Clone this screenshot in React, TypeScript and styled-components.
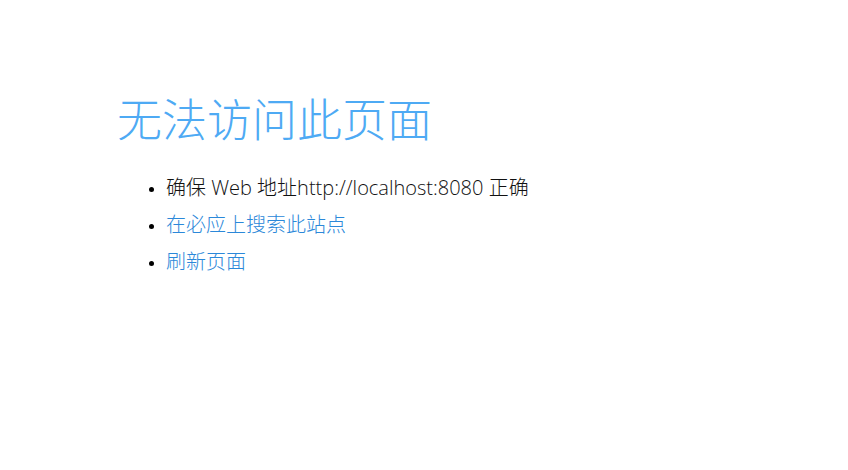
import React from 'react';
import styled, { createGlobalStyle } from 'styled-components';

const GlobalStyle = createGlobalStyle`
  html, body {
    margin: 0;
    padding: 0;
    background: #ffffff;
  }
  body {
    font-family: 'Segoe UI', 'Open Sans', 'Noto Sans CJK SC', sans-serif;
  }
`;

const Page = styled.main`
  padding: 86px 0 0 117px;
`;

const Title = styled.h1`
  margin: 0 0 19px;
  font-family: 'Noto Sans CJK SC', sans-serif;
  font-size: 45px;
  font-weight: 300;
  line-height: 64px;
  color: #4eaaf4;
`;

const Tips = styled.ul`
  margin: 0;
  padding: 0 0 0 49px;
  list-style: disc;
`;

const Tip = styled.li<{ link?: boolean }>`
  font-family: 'Open Sans', 'Noto Sans CJK SC', sans-serif;
  font-size: 20px;
  font-weight: 300;
  line-height: 37px;
  color: ${(p) => (p.link ? '#2b88d9' : '#111111')};

  &::marker {
    color: #000;
    font-size: 14px;
  }
`;

const App: React.FC = () => (
  <>
    <GlobalStyle />
    <Page>
      <Title>无法访问此页面</Title>
      <Tips>
        <Tip>确保 Web 地址http://localhost:8080 正确</Tip>
        <Tip link>在必应上搜索此站点</Tip>
        <Tip link>刷新页面</Tip>
      </Tips>
    </Page>
  </>
);

export default App;
